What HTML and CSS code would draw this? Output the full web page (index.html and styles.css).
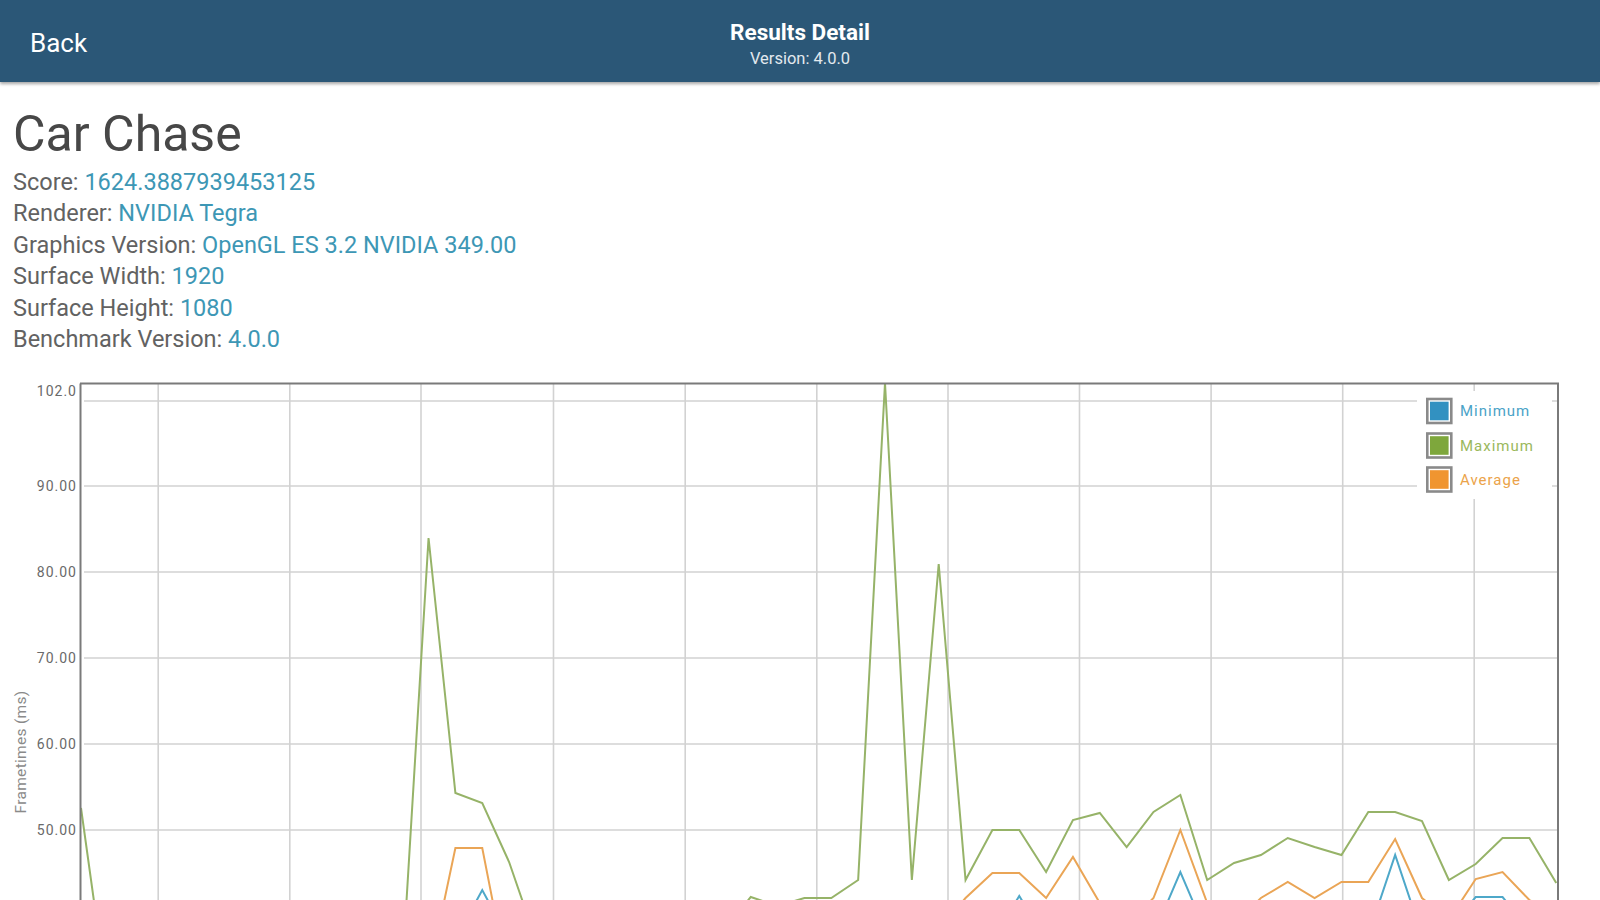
FILE: index.html
```html
<!DOCTYPE html>
<html lang="en">
<head>
<meta charset="utf-8">
<title>Results Detail</title>
<link rel="stylesheet" href="styles.css">
</head>
<body>
<header class="topbar">
  <div class="back">Back</div>
  <div class="heading">
    <div class="heading-title">Results Detail</div>
    <div class="heading-sub">Version: 4.0.0</div>
  </div>
  <div class="spacer"></div>
</header>
<main>
  <section class="summary">
    <h1 class="title">Car Chase</h1>
    <ul class="info">
      <li><span class="label">Score:</span> <span class="value">1624.3887939453125</span></li>
      <li><span class="label">Renderer:</span> <span class="value">NVIDIA Tegra</span></li>
      <li><span class="label">Graphics Version:</span> <span class="value">OpenGL ES 3.2 NVIDIA 349.00</span></li>
      <li><span class="label">Surface Width:</span> <span class="value">1920</span></li>
      <li><span class="label">Surface Height:</span> <span class="value">1080</span></li>
      <li><span class="label">Benchmark Version:</span> <span class="value">4.0.0</span></li>
    </ul>
  </section>
  <div class="chart">
    <svg viewBox="0 362 1600 538" width="1600" height="538" xmlns="http://www.w3.org/2000/svg">
      <g class="grid">
        <line x1="84" y1="401" x2="1557" y2="401"/>
        <line x1="84" y1="486" x2="1557" y2="486"/>
        <line x1="84" y1="572" x2="1557" y2="572"/>
        <line x1="84" y1="658" x2="1557" y2="658"/>
        <line x1="84" y1="744" x2="1557" y2="744"/>
        <line x1="84" y1="830" x2="1557" y2="830"/>
        <line x1="158.2" y1="384" x2="158.2" y2="900"/>
        <line x1="289.8" y1="384" x2="289.8" y2="900"/>
        <line x1="421" y1="384" x2="421" y2="900"/>
        <line x1="553.5" y1="384" x2="553.5" y2="900"/>
        <line x1="685.2" y1="384" x2="685.2" y2="900"/>
        <line x1="816.8" y1="384" x2="816.8" y2="900"/>
        <line x1="948" y1="384" x2="948" y2="900"/>
        <line x1="1079.5" y1="384" x2="1079.5" y2="900"/>
        <line x1="1211.1" y1="384" x2="1211.1" y2="900"/>
        <line x1="1342.7" y1="384" x2="1342.7" y2="900"/>
        <line x1="1474.2" y1="384" x2="1474.2" y2="900"/>
      </g>
      <g class="ylabels">
        <text x="77" y="391">102.0</text>
        <text x="77" y="486">90.00</text>
        <text x="77" y="572">80.00</text>
        <text x="77" y="658">70.00</text>
        <text x="77" y="744">60.00</text>
        <text x="77" y="830">50.00</text>
      </g>
      <text class="ytitle" x="0" y="0" transform="translate(21 752) rotate(-90)">Frametimes (ms)</text>
      <polyline class="series series-max" points="81,808 106.35,990 133.2,1000 374.85,1000 401.7,980 428.55,538 455.4,793 482.25,803 509.1,862 535.95,940 562.8,1000 697.05,1000 723.9,930 750.75,897 777.6,906 804.45,898 831.3,898 858.15,880 885,383 911.85,880 938.7,564 965.55,880 992.4,830 1019.25,830 1046.1,872 1072.95,820 1099.8,813 1126.65,847 1153.5,812 1180.35,795 1207.2,880 1234.05,863 1260.9,855 1287.75,838 1314.6,847 1341.45,855 1368.3,812 1395.15,812 1422,821 1448.85,880 1475.7,864 1502.55,838 1529.4,838 1556.25,883"/>
      <polyline class="series series-avg" points="81,1000 401.7,1000 428.55,975 455.4,848 482.25,848 509.1,985 535.95,1000 911.85,1000 938.7,930 965.55,898 992.4,873 1019.25,873 1046.1,898 1072.95,857 1099.8,903 1126.65,925 1153.5,898 1180.35,830 1207.2,903 1234.05,925 1260.9,898 1287.75,882 1314.6,898 1341.45,882 1368.3,882 1395.15,839 1422,898 1448.85,920 1475.7,879 1502.55,872 1529.4,900 1556.25,915"/>
      <polyline class="series series-min" points="81,1000 428.55,1000 455.4,940 482.25,890 509.1,940 535.95,1000 965.55,1000 992.4,940 1019.25,896 1046.1,940 1072.95,1000 1126.65,1000 1153.5,935 1180.35,872 1207.2,935 1234.05,1000 1341.45,1000 1368.3,935 1395.15,855 1422,935 1448.85,930 1475.7,897 1502.55,897 1529.4,930 1556.25,1000"/>
      <g class="axes">
        <line x1="80.5" y1="383.5" x2="80.5" y2="900"/>
        <line x1="80" y1="383.5" x2="1559" y2="383.5"/>
        <line x1="1558" y1="383" x2="1558" y2="900"/>
      </g>
      <rect class="legend-bg" x="1417" y="391" width="135" height="108"/>
      <g class="legend">
        <rect class="swatch-frame" x="1427.3" y="399" width="24" height="24"/>
        <rect class="swatch-min" x="1430" y="401.7" width="18.6" height="18.6"/>
        <text class="legend-min" x="1460" y="411">Minimum</text>
        <rect class="swatch-frame" x="1427.3" y="433.5" width="24" height="24"/>
        <rect class="swatch-max" x="1430" y="436.2" width="18.6" height="18.6"/>
        <text class="legend-max" x="1460" y="445.5">Maximum</text>
        <rect class="swatch-frame" x="1427.3" y="467.5" width="24" height="24"/>
        <rect class="swatch-avg" x="1430" y="470.2" width="18.6" height="18.6"/>
        <text class="legend-avg" x="1460" y="479.5">Average</text>
      </g>
    </svg>
  </div>
</main>
</body>
</html>
```

FILE: styles.css
```css
html, body {
  margin: 0;
  padding: 0;
  background: #ffffff;
  overflow: hidden;
  font-family: Roboto, "Noto Sans", "Liberation Sans", sans-serif;
}

.topbar {
  display: grid;
  grid-template-columns: 1fr auto 1fr;
  height: 82px;
  background: #2b5777;
  color: #ffffff;
  box-shadow: 0 2px 3px rgba(0, 0, 0, 0.35);
  position: relative;
  z-index: 1;
}

.back {
  align-self: center;
  padding-left: 30px;
  padding-top: 3px;
  font-size: 26px;
}

.heading {
  text-align: center;
  padding-top: 18px;
}

.heading-title {
  font-weight: 700;
  font-size: 22.5px;
  line-height: 28px;
}

.heading-sub {
  font-size: 16.5px;
  line-height: 26px;
  color: #e2e9ee;
}

.summary {
  padding: 24px 13px 0;
}

.title {
  margin: 0;
  font-size: 50px;
  font-weight: 400;
  line-height: 56px;
  color: #474747;
}

.info {
  list-style: none;
  margin: 4.5px 0 0;
  padding: 0;
  font-size: 23.5px;
  line-height: 31.6px;
  color: #626262;
}

.value {
  color: #3d97b5;
}

.chart {
  margin-top: 6px;
}

.chart svg {
  display: block;
  width: 1600px;
  height: 538px;
}

.grid line {
  stroke: #d2d2d2;
  stroke-width: 1.6;
}

.axes line {
  stroke: #7a7a7a;
  stroke-width: 2;
}

.ylabels text {
  font-family: Roboto, "Noto Sans", sans-serif;
  font-size: 14px;
  letter-spacing: 1px;
  fill: #6a6a6a;
  text-anchor: end;
  dominant-baseline: central;
}

.ytitle {
  font-family: Roboto, "Noto Sans", sans-serif;
  font-size: 15.5px;
  letter-spacing: 0.3px;
  fill: #8a8a8a;
  text-anchor: middle;
  dominant-baseline: central;
}

.series {
  fill: none;
  stroke-width: 2;
  stroke-linejoin: miter;
}

.series-max {
  stroke: #96b368;
}

.series-avg {
  stroke: #eaa556;
}

.series-min {
  stroke: #4ea8c9;
}

.legend-bg {
  fill: #ffffff;
}

.swatch-frame {
  fill: #ffffff;
  stroke: #8a8a8a;
  stroke-width: 2.6;
}

.swatch-min {
  fill: #3291c1;
}

.swatch-max {
  fill: #7ea73c;
}

.swatch-avg {
  fill: #f09530;
}

.legend text {
  font-family: Roboto, "Noto Sans", sans-serif;
  font-size: 15px;
  letter-spacing: 1px;
  dominant-baseline: central;
}

.legend-min {
  fill: #4aa3c8;
}

.legend-max {
  fill: #9ab85c;
}

.legend-avg {
  fill: #eba34a;
}
```
